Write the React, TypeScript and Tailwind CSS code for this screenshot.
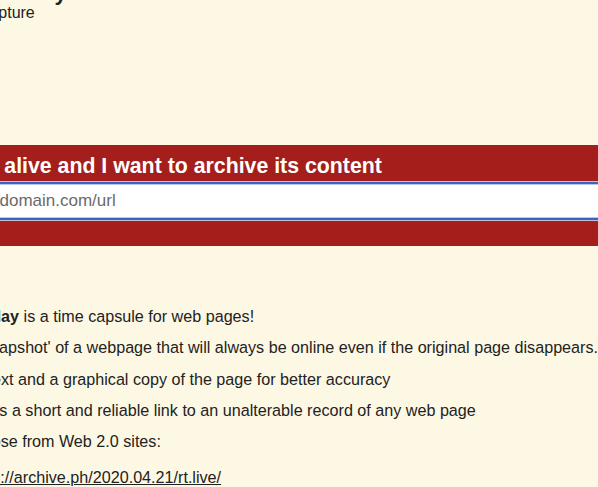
import React from "react";

export default function App() {
  return (
    <div className="w-[598px] h-[487px] overflow-hidden bg-[#fdf8e4] text-[#222] font-['Liberation_Sans',Arial,sans-serif]">
      <header className="ml-[-85px] mt-[-18px] h-[163px]">
        <div className="ml-[10px] text-[22px] font-bold leading-[22px] whitespace-nowrap">archive.today</div>
        <div className="ml-[-3px] text-[16px] leading-[18px] whitespace-nowrap">webpage capture</div>
      </header>

      <section className="bg-[#a41f1c] pt-[9px] pb-[26px]">
        <div className="ml-[-85px]">
          <div className="ml-[-3px] text-[21.3px] font-bold leading-[24px] text-white whitespace-nowrap">
            My url is alive and I want to archive its content
          </div>
          <div className="ml-[36px] mt-[4px] w-[760px]">
            <input
              type="text"
              placeholder="http://domain.com/url"
              className="block w-full h-[38px] bg-white border-2 border-[#3c63c2] px-[4px] text-[17px] text-[#333] placeholder:text-[#6a6a6a] outline-none shadow-[0_0_0_1px_#c9bfd3,inset_0_0_0_1px_#b3c8ee] font-['Liberation_Sans',Arial,sans-serif]"
            />
          </div>
        </div>
      </section>

      <main className="ml-[-85px] mt-[55px] text-[16.15px] leading-[31.25px] whitespace-nowrap">
        <div>
          <b>archive.today</b> is a time capsule for web pages!
        </div>
        <div className="ml-[-6px]">
          It takes a 'snapshot' of a webpage that will always be online even if the original page disappears.
        </div>
        <div className="ml-[-1px]">It saves a text and a graphical copy of the page for better accuracy</div>
        <div>and provides a short and reliable link to an unalterable record of any web page</div>
        <div className="ml-[-5px]">including those from Web 2.0 sites:</div>
        <div className="mt-[5px] ml-[27px]">
          e.g. <a className="underline text-[#222]" href="#">http://archive.ph/2020.04.21/rt.live/</a>
        </div>
      </main>
    </div>
  );
}
